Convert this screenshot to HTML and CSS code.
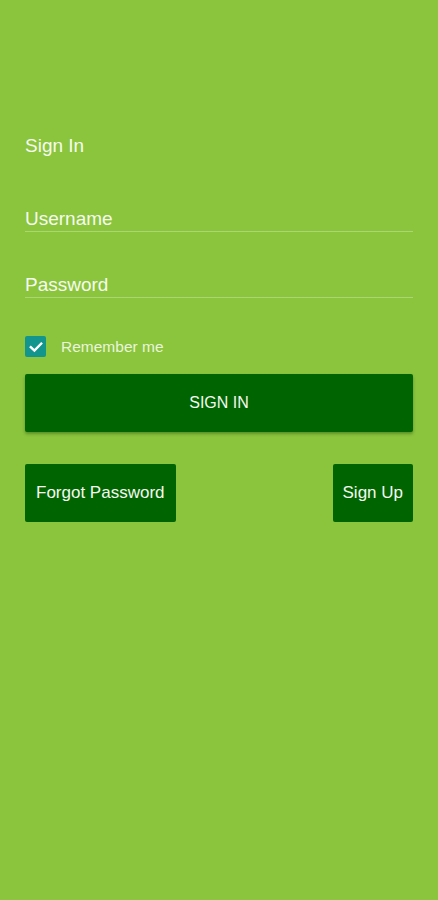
FILE: index.html
```html
<!DOCTYPE html>
<html>
<head>
<meta charset="utf-8">
<link rel="stylesheet" href="styles.css">
</head>
<body>
<div class="screen">
  <div class="title">Sign In</div>
  <div class="field field-first">Username</div>
  <div class="field field-second">Password</div>
  <div class="remember">
    <span class="check">
      <svg width="20" height="20" viewBox="0 0 20 20"><path d="M4.8 10.2 L8.4 13.6 L15.2 6.6" fill="none" stroke="#fff" stroke-width="2.4" stroke-linecap="square"/></svg>
    </span>
    <span class="remember-label">Remember me</span>
  </div>
  <div class="btn btn-main">SIGN IN</div>
  <div class="row">
    <div class="btn btn-small btn-forgot">Forgot Password</div>
    <div class="btn btn-small btn-signup">Sign Up</div>
  </div>
</div>
</body>
</html>
```
FILE: styles.css
```css
html, body {
  margin: 0;
  padding: 0;
  background: #8bc43d;
  height: 100%;
}
.screen {
  display: flex;
  flex-direction: column;
  padding: 135px 25px 0 25px;
  font-family: "Liberation Sans", Arial, sans-serif;
  color: #f5fbee;
}
.title {
  font-size: 19px;
  line-height: 22px;
}
.field {
  font-size: 19px;
  line-height: 22px;
  padding-bottom: 1px;
  border-bottom: 1px solid #a9d873;
}
.field-first {
  margin-top: 51px;
}
.field-second {
  margin-top: 42px;
}
.remember {
  display: flex;
  align-items: center;
  margin-top: 38px;
  height: 21px;
}
.check {
  width: 21px;
  height: 21px;
  border-radius: 2px;
  background: #12958c;
  display: flex;
  align-items: center;
  justify-content: center;
}
.check svg {
  display: block;
}
.remember-label {
  margin-left: 15px;
  font-size: 15.5px;
  color: #e9f5da;
}
.btn {
  background: #006500;
  color: #f4f8f0;
  border-radius: 2px;
  display: flex;
  align-items: center;
  justify-content: center;
  height: 58px;
}
.btn-main {
  margin-top: 17px;
  font-size: 16px;
  box-shadow: 0 2px 3px rgba(0, 50, 0, 0.35);
}
.row {
  display: flex;
  justify-content: space-between;
  margin-top: 32px;
}
.btn-small {
  font-size: 17px;
}
.btn-forgot {
  padding: 0 11px;
}
.btn-signup {
  padding: 0 10px;
}
```
